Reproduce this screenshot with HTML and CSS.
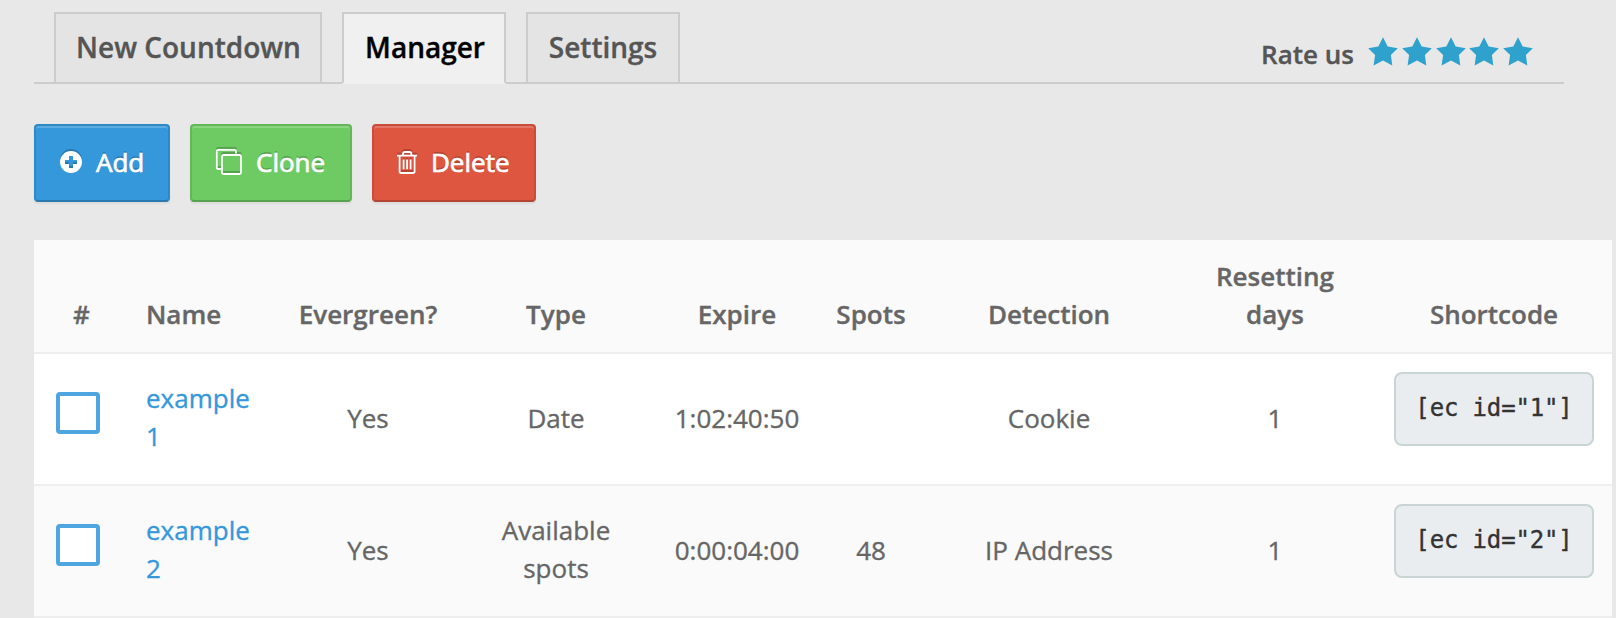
FILE: index.html
```html
<!DOCTYPE html>
<html lang="en">
<head>
<meta charset="utf-8">
<title>Countdown Manager</title>
<link rel="stylesheet" href="styles.css">
</head>
<body>
<svg class="defs" width="0" height="0" aria-hidden="true">
  <symbol id="star" viewBox="0 0 30 29"><path d="M15 0.3 L19.7 9.6 L29.8 11.2 L22.9 18 L24.3 28.5 L15 23.6 L5.6 28.5 L7.1 18 L0.2 11.2 L10.3 9.6 Z"/></symbol>
</svg>
<header class="tabbar">
  <nav class="tabs">
    <a class="tab tab-new">New Countdown</a>
    <a class="tab tab-manager active">Manager</a>
    <a class="tab tab-settings">Settings</a>
  </nav>
  <div class="rate">
    <span>Rate us</span>
    <div class="stars">
      <svg><use href="#star"/></svg><svg><use href="#star"/></svg><svg><use href="#star"/></svg><svg><use href="#star"/></svg><svg><use href="#star"/></svg>
    </div>
  </div>
</header>
<div class="toolbar">
  <button class="btn add">
    <svg class="icon" width="22" height="22" viewBox="0 0 22 22"><path fill="#fff" fill-rule="evenodd" d="M11 0a11 11 0 1 0 0 22a11 11 0 0 0 0-22ZM9 5h4v4h4v4h-4v4h-4v-4h-4v-4h4Z"/></svg>
    <span>Add</span>
  </button>
  <button class="btn clone">
    <svg class="icon" width="26" height="26" viewBox="0 0 26 26" fill="none" stroke="#fff" stroke-width="1.8"><rect x="6" y="6" width="19" height="19" rx="1.5"/><path d="M4.8 20H2.3a1.5 1.5 0 0 1-1.5-1.5V2.3A1.5 1.5 0 0 1 2.3.8H18.5A1.5 1.5 0 0 1 20 2.3V4.6"/></svg>
    <span>Clone</span>
  </button>
  <button class="btn delete">
    <svg class="icon" width="20" height="23" viewBox="0 0 20 23" fill="none" stroke="#fff" stroke-width="1.8"><path d="M0 4.6H20M6 4.4V3.2Q6 1 8 1H12.4Q14.4 1 14.4 3.2V4.4M2.6 5V20.2Q2.6 22 4.4 22H15.8Q17.6 22 17.6 20.2V5M6.6 8.4V18.2M10.1 8.4V18.2M13.6 8.4V18.2"/></svg>
    <span>Delete</span>
  </button>
</div>
<table class="grid">
  <colgroup><col class="c-check"><col class="c-name"><col class="c-ever"><col class="c-type"><col class="c-expire"><col class="c-spots"><col class="c-detect"><col class="c-reset"><col class="c-code"></colgroup>
  <thead>
    <tr><th>#</th><th class="name">Name</th><th>Evergreen?</th><th>Type</th><th>Expire</th><th>Spots</th><th>Detection</th><th>Resetting<br>days</th><th>Shortcode</th></tr>
  </thead>
  <tbody>
    <tr><td class="check"><span class="box"></span></td><td class="name"><a>example<br>1</a></td><td>Yes</td><td>Date</td><td>1:02:40:50</td><td></td><td>Cookie</td><td>1</td><td class="code"><pre>[ec id="1"]</pre></td></tr>
    <tr><td class="check"><span class="box"></span></td><td class="name"><a>example<br>2</a></td><td>Yes</td><td class="wrapped">Available<br>spots</td><td>0:00:04:00</td><td>48</td><td>IP Address</td><td>1</td><td class="code"><pre>[ec id="2"]</pre></td></tr>
  </tbody>
</table>
</body>
</html>
```

FILE: styles.css
```css
* { box-sizing: border-box; }
body {
  margin: 0;
  padding: 12px 0 0 34px;
  height: 618px;
  overflow: hidden;
  background: #e8e8e8;
  font: 26px/38px "Open Sans", sans-serif;
  color: #666;
  -webkit-text-stroke: 0.35px;
}
.defs { display: block; }
.tabbar {
  display: flex;
  justify-content: space-between;
  width: 1530px;
  height: 72px;
  padding: 0 31px 0 20px;
  border-bottom: 2px solid #ccc;
}
.tabs { display: flex; gap: 20px; }
.tab {
  height: 70px;
  padding-top: 14px;
  border: 2px solid #ccc;
  border-bottom: 0;
  background: #e4e4e4;
  color: #555;
  font-size: 28px;
  font-weight: 600;
  text-align: center;
  white-space: nowrap;
}
.tab-new { width: 268px; padding-left: 1px; }
.tab-manager { width: 164px; padding-left: 2px; }
.tab-settings { width: 154px; }
.tab.active { height: 72px; background: #f0f0f0; color: #000; border-bottom: 2px solid #f0f0f0; }
.rate { display: flex; gap: 14px; padding-top: 23px; color: #555; font-weight: 600; }
.stars { display: flex; gap: 3.75px; padding-top: 2px; }
.stars svg { width: 30px; height: 29px; fill: #2ea2cc; }
.toolbar { display: flex; gap: 20px; margin: 40px 0 38px; }
.btn {
  display: flex;
  align-items: center;
  height: 78px;
  padding: 0 0 2px 24px;
  border: 2px solid;
  border-radius: 4px;
  color: #fff;
  font: 26px/38px "Open Sans", sans-serif;
  -webkit-text-stroke: 0.7px;
  box-shadow: inset 0 2px 0 rgba(255,255,255,.2), 0 2px 2px rgba(0,0,0,.05);
  text-shadow: 0 -2px 0 rgba(0,0,0,.2);
}
.icon { filter: drop-shadow(0 -2px 0 rgba(0,0,0,.2)); overflow: visible; }
.add { width: 136px; background: #3498db; border-color: #2f89c5 #2f89c5 #2a7aaf; }
.add .icon { margin-right: 14px; }
.clone { width: 162px; background: #6ecb63; border-color: #63b759 #63b759 #58a24f; }
.clone .icon { margin-right: 14px; }
.delete { width: 164px; padding-left: 23px; background: #de5640; border-color: #c84d3a #c84d3a #b24533; }
.delete .icon { margin-right: 14px; }
.grid { width: 1578px; table-layout: fixed; border-spacing: 0; background: #fff; }
.c-check { width: 95px; }
.c-name { width: 151px; }
.c-ever { width: 176px; }
.c-type { width: 200px; }
.c-expire { width: 162px; }
.c-spots { width: 106px; }
.c-detect { width: 250px; }
.c-reset { width: 202px; }
.c-code { width: 236px; }
th, td { padding: 0; border-bottom: 2px solid #eee; text-align: center; }
th { height: 114px; padding-bottom: 19px; vertical-align: bottom; font-weight: 600; background: #fafafa; }
td { height: 132px; padding-bottom: 3px; vertical-align: middle; }
tbody tr:nth-child(2) { background: #fafafa; }
th.name, td.name { padding-left: 17px; text-align: left; }
td.name, td.wrapped { padding-bottom: 5px; }
.name a { color: #3498db; }
.check, .code { padding-bottom: 0; vertical-align: top; }
.check { padding-top: 38px; text-align: left; padding-left: 22px; }
.box { display: block; width: 44px; height: 42px; border: 4px solid #4fa5df; border-radius: 4px; background: #fff; }
.code { padding: 18px 18px 0; }
pre {
  margin: 0;
  height: 74px;
  padding-top: 15px;
  border: 2px solid #c9d5d5;
  border-radius: 8px;
  background: #e9edf0;
  color: #333;
  font: 24px/38px "DejaVu Sans Mono", monospace;
  letter-spacing: -0.15px;
}
```
